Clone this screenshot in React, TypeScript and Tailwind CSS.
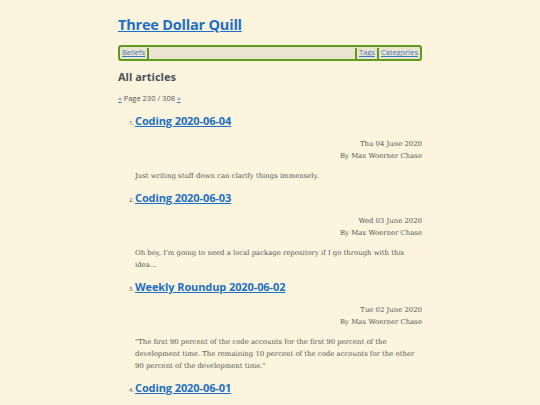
const HEAD = { fontFamily: "'Open Sans', 'Noto Sans', sans-serif" };
const BODY = { fontFamily: "'DejaVu Serif', 'Liberation Serif', serif" };

const articles = [
  {
    n: 1,
    title: "Coding 2020-06-04",
    date: "Thu 04 June 2020",
    excerpt: "Just writing stuff down can clarify things immensely.",
  },
  {
    n: 2,
    title: "Coding 2020-06-03",
    date: "Wed 03 June 2020",
    excerpt:
      "Oh boy, I'm going to need a local package repository if I go through with this idea...",
  },
  {
    n: 3,
    title: "Weekly Roundup 2020-06-02",
    date: "Tue 02 June 2020",
    excerpt:
      "\"The first 90 percent of the code accounts for the first 90 percent of the development time. The remaining 10 percent of the code accounts for the other 90 percent of the development time.\"",
  },
  {
    n: 4,
    title: "Coding 2020-06-01",
    date: "Mon 01 June 2020",
    excerpt: "",
  },
];

function Sep() {
  return <span className="mx-[2px] h-[11px] w-[2px] bg-[#5e9a1c]" />;
}

export default function App() {
  return (
    <div className="h-[405px] w-full overflow-hidden bg-[#fcf4dd]" style={BODY}>
      <div className="mx-auto w-[304px] pt-[14px]">
        <h1 className="text-[14.5px] font-bold leading-[22px] tracking-[-0.2px]" style={HEAD}>
          <a href="#" className="text-[#1b6fc4] underline">
            Three Dollar Quill
          </a>
        </h1>

        <nav
          className="mt-[9px] flex h-[16px] items-center rounded-[3px] border-2 border-[#5e9a1c] bg-[#ebe4d1] px-[2px] text-[7.5px]"
          style={HEAD}
        >
          <a href="#" className="text-[#3f78b8] underline">
            Beliefs
          </a>
          <Sep />
          <span className="flex-1" />
          <Sep />
          <a href="#" className="text-[#3f78b8] underline">
            Tags
          </a>
          <Sep />
          <a href="#" className="text-[#3f78b8] underline">
            Categories
          </a>
        </nav>

        <h2 className="mt-[8px] text-[11px] font-bold leading-[16px] text-[#4b5259]" style={HEAD}>
          All articles
        </h2>

        <p className="mt-[7px] text-[7.5px] leading-[12px] text-[#555]" style={HEAD}>
          <a href="#" className="text-[#3f78b8] underline">
            «
          </a>{" "}
          Page 230 / 308{" "}
          <a href="#" className="text-[#3f78b8] underline">
            »
          </a>
        </p>

        <ol className="mt-[7px] pl-[9px]">
          {articles.map((a) => (
            <li key={a.n} className="mb-[6px]">
              <div className="flex items-baseline">
                <span className="w-[7px] text-right text-[6px] text-[#555]" style={HEAD}>
                  {a.n}.
                </span>
                <a
                  href="#"
                  className="ml-[1px] text-[11px] font-bold leading-[20px] tracking-[-0.1px] text-[#1b6fc4] underline"
                  style={HEAD}
                >
                  {a.title}
                </a>
              </div>
              <div className="ml-[8px]">
                <div className="mt-[7px] text-right text-[6.9px] leading-[12px] text-[#555]">
                  <div>{a.date}</div>
                  <div>By Max Woerner Chase</div>
                </div>
                {a.excerpt && (
                  <p className="mt-[8px] text-[6.9px] leading-[12px] text-[#555]">{a.excerpt}</p>
                )}
              </div>
            </li>
          ))}
        </ol>
      </div>
    </div>
  );
}
